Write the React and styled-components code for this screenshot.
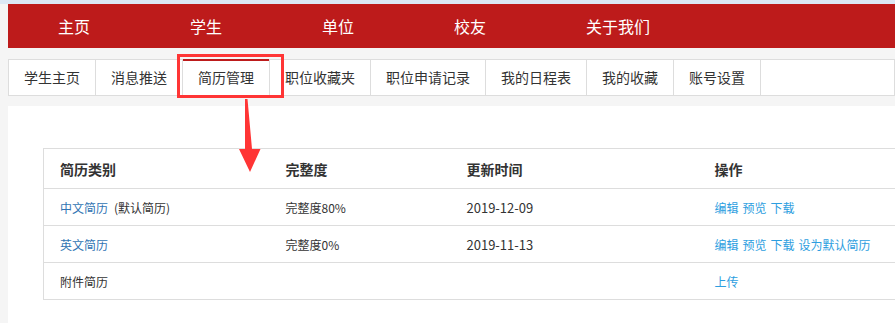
import React from "react";
import styled, { createGlobalStyle } from "styled-components";

const GlobalStyle = createGlobalStyle`
  html, body {
    margin: 0;
    padding: 0;
    background: #f5f5f5;
    font-family: "Noto Sans CJK SC", "Liberation Sans", sans-serif;
    color: #333;
  }
  * { box-sizing: border-box; }
`;

const nav = ["主页", "学生", "单位", "校友", "关于我们"];
const tabs = ["学生主页", "消息推送", "简历管理", "职位收藏夹", "职位申请记录", "我的日程表", "我的收藏", "账号设置"];
const rows = [
  { name: "中文简历", note: "(默认简历)", link: true, done: "完整度80%", date: "2019-12-09", ops: ["编辑", "预览", "下载"] },
  { name: "英文简历", link: true, done: "完整度0%", date: "2019-11-13", ops: ["编辑", "预览", "下载", "设为默认简历"] },
  { name: "附件简历", link: false, done: "", date: "", ops: ["上传"] },
];

const App = () => {
  return (
    <Page>
      <GlobalStyle />
      <TopStrip />
      <Main>
        <NavBar>
          {nav.map((n) => (
            <NavItem key={n}>{n}</NavItem>
          ))}
        </NavBar>
        <SubTabs>
          {tabs.map((t, i) => (
            <Tab key={t} $active={i === 2}>
              {t}
            </Tab>
          ))}
        </SubTabs>
        <Panel>
          <Table>
            <colgroup>
              <col style={{ width: 226 }} />
              <col style={{ width: 181 }} />
              <col style={{ width: 248 }} />
              <col style={{ width: 245 }} />
            </colgroup>
            <thead>
              <tr>
                <Th>简历类别</Th>
                <Th>完整度</Th>
                <Th>更新时间</Th>
                <Th>操作</Th>
              </tr>
            </thead>
            <tbody>
              {rows.map((r) => (
                <tr key={r.name}>
                  <Td>
                    <NameLink $link={r.link}>{r.name}</NameLink>
                    {r.note && <Note>{r.note}</Note>}
                  </Td>
                  <Td>{r.done}</Td>
                  <Td $size={13}>{r.date}</Td>
                  <Td>
                    <Ops>
                      {r.ops.map((o) => (
                        <OpLink key={o}>{o}</OpLink>
                      ))}
                    </Ops>
                  </Td>
                </tr>
              ))}
            </tbody>
          </Table>
        </Panel>
      </Main>
      <Highlight />
      <Arrow width="30" height="80" viewBox="0 0 30 80">
        <polygon points="5,0 7.5,0 12,50 20.5,50 10,73 -1,50 5,50" fill="#ff3535" />
      </Arrow>
    </Page>
  );
};

const Page = styled.div`
  position: relative;
  min-height: 323px;
  overflow: hidden;
`;

const TopStrip = styled.div`
  height: 4px;
  background: #dce8f5;
`;

const Main = styled.div`
  margin-left: 8px;
`;

const NavBar = styled.nav`
  height: 44px;
  background: #bd1b1b;
  display: flex;
  align-items: center;
`;

const NavItem = styled.a`
  padding: 0 50px;
  color: #fff;
  font-size: 16px;
  line-height: 44px;
  white-space: nowrap;
`;

const SubTabs = styled.div`
  margin-top: 11px;
  height: 37px;
  background: #fff;
  border: 1px solid #ddd;
  display: flex;
`;

const Tab = styled.div`
  position: relative;
  padding: 0 15px;
  border-right: 1px solid #ddd;
  font-size: 14px;
  line-height: 35px;
  color: #333;
  white-space: nowrap;
  &::before {
    content: "";
    display: ${(p) => (p.$active ? "block" : "none")};
    position: absolute;
    left: 0;
    right: 0;
    top: -1px;
    height: 2px;
    background: #bd1b1b;
  }
`;

const Panel = styled.div`
  margin-top: 10px;
  background: #fff;
  padding: 42px 0 24px 35px;
  min-height: 217px;
  overflow: hidden;
`;

const Table = styled.table`
  border-collapse: collapse;
  table-layout: fixed;
  width: 900px;
  border: 1px solid #ddd;
  border-right: none;
`;

const Th = styled.th`
  height: 40px;
  padding: 0 16px;
  text-align: left;
  font-size: 14px;
  font-weight: bold;
  color: #333;
  border-bottom: 1px solid #ddd;
`;

const Td = styled.td`
  height: 37px;
  padding: 0 16px;
  font-size: ${(p) => p.$size || 12}px;
  color: #333;
  border-bottom: 1px solid #ddd;
  white-space: nowrap;
`;

const NameLink = styled.span`
  color: ${(p) => (p.$link ? "#3174b3" : "#333")};
`;

const Note = styled.span`
  margin-left: 6px;
  color: #333;
`;

const Ops = styled.div`
  display: flex;
  gap: 4px;
`;

const OpLink = styled.a`
  color: #2d9ee0;
  cursor: pointer;
`;

const Highlight = styled.div`
  position: absolute;
  left: 177px;
  top: 54px;
  width: 107px;
  height: 44px;
  border: 3px solid #ff3535;
`;

const Arrow = styled.svg`
  position: absolute;
  left: 240px;
  top: 99px;
  overflow: visible;
`;

export default App;
